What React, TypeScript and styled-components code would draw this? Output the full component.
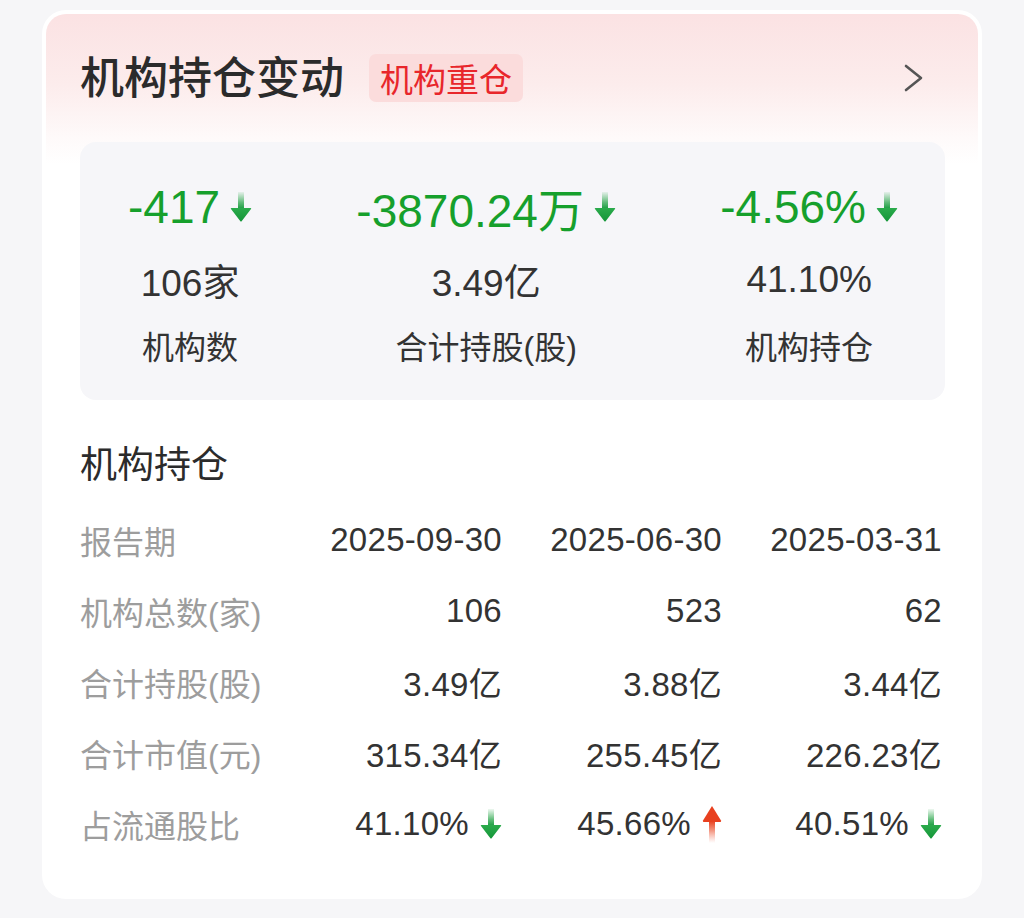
import React, { useId } from "react";
import styled, { createGlobalStyle } from "styled-components";

const GlobalStyle = createGlobalStyle`
  html, body {
    margin: 0;
    padding: 0;
    background: #f6f6f8;
  }
  body {
    font-family: "Liberation Sans", "Noto Sans CJK SC", sans-serif;
    -webkit-font-smoothing: antialiased;
  }
`;

const Page = styled.div`
  padding: 10px 42px 20px 42px;
`;

const Card = styled.div`
  width: 940px;
  box-sizing: border-box;
  background: #ffffff;
  border-radius: 24px;
  padding: 4px;
`;

const CardInner = styled.div`
  border-radius: 20px;
  background: linear-gradient(180deg, #fbe2e3 0px, #fcecec 70px, #fefafa 125px, #ffffff 150px);
  padding: 0 33px 36px 34px;
`;

const Header = styled.div`
  height: 128px;
  display: flex;
  align-items: center;
`;

const Title = styled.h1`
  margin: 0;
  font-size: 44px;
  font-weight: 500;
  color: #2b2b2b;
  line-height: 1;
  padding-top: 2px;
`;

const Tag = styled.span`
  margin-left: 25px;
  height: 48px;
  display: inline-flex;
  align-items: center;
  padding: 0 11px;
  background: #fbdcdc;
  border-radius: 7px;
  color: #e8262b;
  font-size: 33px;
  font-weight: 400;
`;

const Chevron = styled.svg`
  margin-left: auto;
  margin-right: 20px;
`;

const StatsPanel = styled.div`
  height: 258px;
  box-sizing: border-box;
  background: #f6f6f9;
  border-radius: 16px;
  padding: 37px 47px 0 48px;
  display: flex;
  justify-content: space-between;
  align-items: flex-start;
`;

const StatCol = styled.div`
  display: flex;
  flex-direction: column;
  align-items: center;
`;

const Change = styled.div`
  height: 56px;
  display: flex;
  align-items: center;
  gap: 10px;
  color: #16a02c;
  font-size: 46px;
  font-weight: 400;
`;

const StatValue = styled.div`
  margin-top: 17px;
  height: 56px;
  display: flex;
  align-items: center;
  color: #333333;
  font-size: 37px;
`;

const StatLabel = styled.div`
  margin-top: 13px;
  height: 48px;
  display: flex;
  align-items: center;
  color: #333333;
  font-size: 32px;
`;

const SectionTitle = styled.h2`
  margin: 38px 0 0 0;
  height: 48px;
  display: flex;
  align-items: center;
  font-size: 37px;
  font-weight: 400;
  color: #2b2b2b;
`;

const Table = styled.div`
  margin-top: 18px;
`;

const Row = styled.div`
  display: grid;
  grid-template-columns: 1fr 220px 220px 220px;
  height: 71px;
  align-items: center;
  padding-right: 3px;
`;

const Label = styled.div`
  color: #9d9d9d;
  font-size: 32px;
  white-space: nowrap;
`;

const Cell = styled.div`
  display: flex;
  justify-content: flex-end;
  align-items: center;
  gap: 11px;
  color: #333333;
  font-size: 33px;
  white-space: nowrap;
  letter-spacing: 0.3px;
`;

type Dir = "up" | "down";

const Arrow = ({ dir }: { dir: Dir }) => {
  const id = useId().replace(/:/g, "");
  if (dir === "down") {
    return (
      <svg width="22" height="30" viewBox="0 0 22 30">
        <defs>
          <linearGradient id={`${id}s`} x1="0" y1="0" x2="0" y2="1">
            <stop offset="0" stopColor="#2aa84a" stopOpacity="0.08" />
            <stop offset="0.6" stopColor="#22a244" stopOpacity="0.7" />
            <stop offset="1" stopColor="#1a9c40" stopOpacity="1" />
          </linearGradient>
          <linearGradient id={`${id}h`} x1="0" y1="0" x2="0" y2="1">
            <stop offset="0" stopColor="#2bab4c" />
            <stop offset="1" stopColor="#159639" />
          </linearGradient>
        </defs>
        <rect x="8" y="0" width="6" height="17" fill={`url(#${id}s)`} />
        <path d="M1.5 16 L20.5 16 Q21.8 16 21 17 L11.8 29 Q11 30 10.2 29 L1 17 Q0.2 16 1.5 16 Z" fill={`url(#${id}h)`} />
      </svg>
    );
  }
  return (
    <svg width="20" height="38" viewBox="0 0 20 38">
      <defs>
        <linearGradient id={`${id}s`} x1="0" y1="0" x2="0" y2="1">
          <stop offset="0" stopColor="#e8401f" stopOpacity="1" />
          <stop offset="0.45" stopColor="#ec5533" stopOpacity="0.6" />
          <stop offset="1" stopColor="#f27a66" stopOpacity="0" />
        </linearGradient>
      </defs>
      <path d="M10 1 L19 15.5 Q19.6 17 18 17 L2 17 Q0.4 17 1 15.5 Z" fill="#e8401f" />
      <rect x="7" y="16" width="6" height="22" fill={`url(#${id}s)`} />
    </svg>
  );
};

const stats = [
  { change: "-417", value: "106家", label: "机构数" },
  { change: "-3870.24万", value: "3.49亿", label: "合计持股(股)" },
  { change: "-4.56%", value: "41.10%", label: "机构持仓" },
];

const rows: { label: string; cells: { text: string; dir?: Dir }[] }[] = [
  {
    label: "报告期",
    cells: [{ text: "2025-09-30" }, { text: "2025-06-30" }, { text: "2025-03-31" }],
  },
  { label: "机构总数(家)", cells: [{ text: "106" }, { text: "523" }, { text: "62" }] },
  { label: "合计持股(股)", cells: [{ text: "3.49亿" }, { text: "3.88亿" }, { text: "3.44亿" }] },
  {
    label: "合计市值(元)",
    cells: [{ text: "315.34亿" }, { text: "255.45亿" }, { text: "226.23亿" }],
  },
  {
    label: "占流通股比",
    cells: [
      { text: "41.10%", dir: "down" },
      { text: "45.66%", dir: "up" },
      { text: "40.51%", dir: "down" },
    ],
  },
];

export default function App() {
  return (
    <>
      <GlobalStyle />
      <Page>
        <Card>
          <CardInner>
            <Header>
              <Title>机构持仓变动</Title>
              <Tag>机构重仓</Tag>
              <Chevron width="22" height="28" viewBox="0 0 22 28">
                <polyline
                  points="3,2 18,14 3,26"
                  fill="none"
                  stroke="#555555"
                  strokeWidth="2.6"
                  strokeLinecap="round"
                  strokeLinejoin="round"
                />
              </Chevron>
            </Header>
            <StatsPanel>
              {stats.map((s) => (
                <StatCol key={s.label}>
                  <Change>
                    <span>{s.change}</span>
                    <Arrow dir="down" />
                  </Change>
                  <StatValue>{s.value}</StatValue>
                  <StatLabel>{s.label}</StatLabel>
                </StatCol>
              ))}
            </StatsPanel>
            <SectionTitle>机构持仓</SectionTitle>
            <Table>
              {rows.map((r) => (
                <Row key={r.label}>
                  <Label>{r.label}</Label>
                  {r.cells.map((c, i) => (
                    <Cell key={i}>
                      <span>{c.text}</span>
                      {c.dir && <Arrow dir={c.dir} />}
                    </Cell>
                  ))}
                </Row>
              ))}
            </Table>
          </CardInner>
        </Card>
      </Page>
    </>
  );
}
